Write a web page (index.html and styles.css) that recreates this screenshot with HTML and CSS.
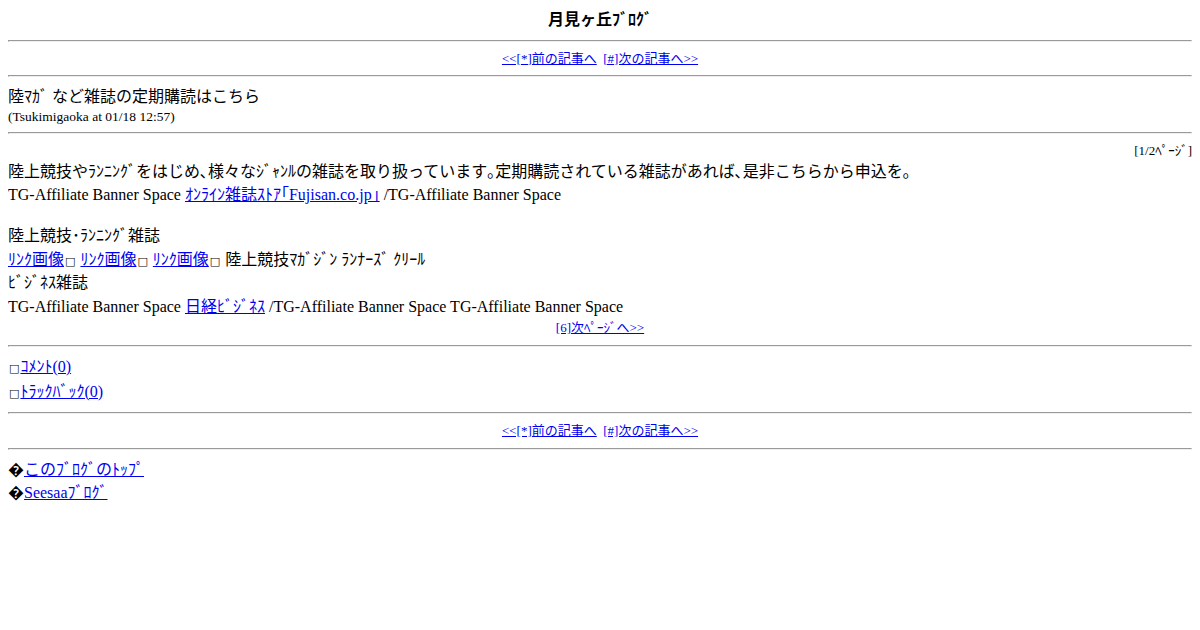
FILE: index.html
```html
<!DOCTYPE html>
<html>

<head>
    <meta charset="utf-8">
    <title>月見ヶ丘ﾌﾞﾛｸﾞ</title>
    <link rel="stylesheet" href="styles.css">
</head>

<body>
    <div class="center line"><b>月見ヶ丘ﾌﾞﾛｸﾞ</b></div>
    <hr>
    <div class="center small">
        <a href="#">&lt;&lt;[*]前の記事へ</a>&nbsp;
        <a href="#">[#]次の記事へ&gt;&gt;</a>
    </div>
    <hr>

    <!-- Entry -->
    <div class="entry-title">陸ﾏｶﾞ など雑誌の定期購読はこちら</div>
    <div class="date">(Tsukimigaoka at 01/18 12:57)</div>
    <hr>
    <div class="right small">[1/2ﾍﾟｰｼﾞ]</div>
    <div class="line">陸上競技やﾗﾝﾆﾝｸﾞをはじめ､様々なｼﾞｬﾝﾙの雑誌を取り扱っています｡定期購読されている雑誌があれば､是非こちらから申込を｡</div>
    <div class="line">TG-Affiliate Banner Space <a href="#">ｵﾝﾗｲﾝ雑誌ｽﾄｱ｢Fujisan.co.jp｣</a> /TG-Affiliate Banner Space</div>
    <div class="line gap">陸上競技･ﾗﾝﾆﾝｸﾞ雑誌</div>
    <div class="line"><a href="#">ﾘﾝｸ画像</a><span class="emoji">□</span> <a href="#">ﾘﾝｸ画像</a><span class="emoji">□</span> <a href="#">ﾘﾝｸ画像</a><span class="emoji">□</span> 陸上競技ﾏｶﾞｼﾞﾝ ﾗﾝﾅｰｽﾞ ｸﾘｰﾙ</div>
    <div class="line">ﾋﾞｼﾞﾈｽ雑誌</div>
    <div class="line">TG-Affiliate Banner Space <a href="#">日経ﾋﾞｼﾞﾈｽ</a> /TG-Affiliate Banner Space TG-Affiliate Banner Space</div>
    <div class="center small next-page"><a href="#">[6]次ﾍﾟｰｼﾞへ&gt;&gt;</a></div>
    <hr>

    <!-- Comments -->
    <div class="row"><span class="emoji">□</span><a href="#">ｺﾒﾝﾄ(0)</a></div>
    <div class="row"><span class="emoji">□</span><a href="#">ﾄﾗｯｸﾊﾞｯｸ(0)</a></div>
    <hr>
    <div class="center small">
        <a href="#">&lt;&lt;[*]前の記事へ</a>&nbsp;
        <a href="#">[#]次の記事へ&gt;&gt;</a>
    </div>
    <hr>

    <!-- Footer -->
    <div class="line">&#xFFFD;<a href="#">このﾌﾞﾛｸﾞのﾄｯﾌﾟ</a></div>
    <div class="line">&#xFFFD;<a href="#">Seesaaﾌﾞﾛｸﾞ</a></div>
</body>

</html>
```

FILE: styles.css
```css
body {
    margin: 8px;
    font-family: "Liberation Serif", "Noto Sans CJK JP", serif;
    font-size: 16px;
    color: #000;
    background: #fff;
}

a {
    color: #0000ee;
}

hr {
    margin: 8px 0;
}

.center {
    text-align: center;
}

.right {
    text-align: right;
}

.line {
    height: 23.5px;
    line-height: 23.5px;
}

.small {
    font-size: 13px;
    height: 17.5px;
    line-height: 17.5px;
}

.next-page {
    height: 19px;
    line-height: 19px;
}

.entry-title {
    font-size: 16px;
    height: 24px;
    line-height: 24px;
}

.date {
    font-size: 13.5px;
    height: 15px;
    line-height: 15px;
}

.gap {
    margin-top: 17.5px;
}

.row {
    height: 24.5px;
    line-height: 24.5px;
}

.emoji {
    font-family: "DejaVu Sans", sans-serif;
    font-size: 11px;
    padding: 0 1px;
}
```
